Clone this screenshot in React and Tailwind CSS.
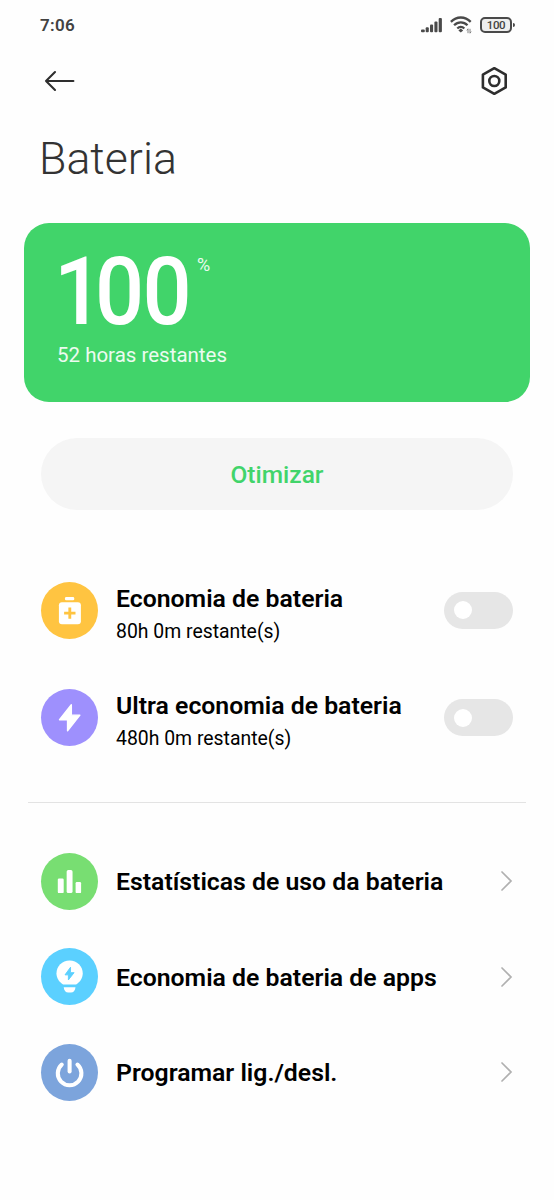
import { useState } from "react";

function SignalIcon() {
  return (
    <svg width="21" height="15" viewBox="0 0 21 15" fill="#4a4a4a">
      <rect x="0" y="11.6" width="3.8" height="2.7" rx="1" />
      <rect x="4.7" y="9.2" width="3.1" height="5.1" rx="1" />
      <rect x="9" y="6.4" width="3.1" height="7.9" rx="1" />
      <rect x="13.4" y="3.4" width="3.1" height="10.9" rx="1" />
      <rect x="17.7" y="0.1" width="3.2" height="14.2" rx="1" />
    </svg>
  );
}

function WifiIcon() {
  return (
    <svg width="22" height="18" viewBox="0 0 22 18" fill="none">
      <g stroke="#4a4a4a" strokeWidth="2.3">
        <path d="M0.9 5.9C6.6 0 15 0 20.7 5.9" />
        <path d="M4.1 9.3C8 5.4 13.6 5.4 17.5 9.3" />
        <path d="M7.3 12.5C9.3 10.5 12.3 10.5 14.3 12.5" />
      </g>
      <path d="M10.8 12.6L13.2 14.5L10.8 16.6L8.4 14.5Z" fill="#4a4a4a" />
      <path
        d="M18 17.2V12.8L16.8 14.4M20 12.8V17.2L21.2 15.6"
        stroke="#777"
        strokeWidth="0.9"
      />
    </svg>
  );
}

function BatteryPlusIcon() {
  return (
    <svg className="size-full" viewBox="0 0 56 56" fill="white">
      <rect x="23.5" y="14.8" width="9.2" height="3.2" rx="1.3" />
      <rect x="17.6" y="19.8" width="21.6" height="21.8" rx="3" />
      <path
        d="M28.3 25V36.2M22.7 30.6H33.9"
        stroke="#ffc441"
        strokeWidth="2.8"
      />
    </svg>
  );
}

function BoltIcon() {
  return (
    <svg className="size-full" viewBox="0 0 56 56" fill="white">
      <path
        d="M29.8 15.5V25.7H38.2L26.1 41V30.2H18.2Z"
        stroke="white"
        strokeWidth="1.4"
        strokeLinejoin="round"
      />
    </svg>
  );
}

function StatsIcon() {
  return (
    <svg className="size-full" viewBox="0 0 56 56" fill="white">
      <rect x="16.5" y="25" width="5.8" height="14.4" rx="1.2" />
      <rect x="25.2" y="16.8" width="5.8" height="22.6" rx="1.6" />
      <rect x="34" y="28.6" width="5.4" height="10.8" rx="1.2" />
    </svg>
  );
}

function BulbIcon() {
  return (
    <svg className="size-full" viewBox="0 0 56 56" fill="white">
      <path d="M28.1 12.2C20.8 12.2 15.2 17.8 15.2 24.8C15.2 29.7 17.8 33.4 21.7 35.8H34.5C38.4 33.4 41 29.7 41 24.8C41 17.8 35.4 12.2 28.1 12.2Z" />
      <path d="M22.3 38.6H33.9C33.6 42.1 31.8 43.8 29.4 43.8H26.8C24.4 43.8 22.6 42.1 22.3 38.6Z" />
      <path
        d="M29 18.9V24.2H32.5L26.9 31.4V26.4H23.6Z"
        fill="#5bd0ff"
        stroke="#5bd0ff"
        strokeWidth="0.9"
        strokeLinejoin="round"
      />
    </svg>
  );
}

function PowerIcon() {
  return (
    <svg
      className="size-full"
      viewBox="0 0 56 56"
      fill="none"
      stroke="white"
      strokeWidth="4"
      strokeLinecap="round"
    >
      <path d="M28.1 16.4V27" />
      <path d="M20.4 20.2A11.6 11.6 0 1 0 35.8 20.2" />
    </svg>
  );
}

const modes = [
  {
    id: "saver",
    title: "Economia de bateria",
    subtitle: "80h 0m restante(s)",
    color: "bg-[#ffc441]",
    Icon: BatteryPlusIcon,
  },
  {
    id: "ultra",
    title: "Ultra economia de bateria",
    subtitle: "480h 0m restante(s)",
    color: "bg-[#9e90fd]",
    Icon: BoltIcon,
  },
];

const links = [
  {
    title: "Estatísticas de uso da bateria",
    color: "bg-[#78de72]",
    Icon: StatsIcon,
  },
  {
    title: "Economia de bateria de apps",
    color: "bg-[#5bd0ff]",
    Icon: BulbIcon,
  },
  {
    title: "Programar lig./desl.",
    color: "bg-[#7ca4dc]",
    Icon: PowerIcon,
  },
];

function Toggle({ checked, onChange, label }) {
  return (
    <button
      role="switch"
      aria-checked={checked}
      aria-label={label}
      onClick={onChange}
      className={`flex h-[37px] w-[69px] shrink-0 items-center rounded-full px-2.5 ${
        checked ? "justify-end bg-[#41d46a]" : "bg-[#e6e6e6]"
      }`}
    >
      <span className="size-[18px] rounded-full bg-white" />
    </button>
  );
}

export default function App() {
  const [enabled, setEnabled] = useState({ saver: false, ultra: false });

  const toggle = (id) => setEnabled((prev) => ({ ...prev, [id]: !prev[id] }));

  return (
    <div className="min-h-[1200px] w-full bg-[#fefefe] font-['Roboto',sans-serif] text-black">
      {/* Status bar */}
      <div className="flex h-[50px] items-center justify-between pr-[39px] pl-10 text-[#424242]">
        <span className="pt-0.5 text-[17px] font-semibold tracking-[0.3px]">
          7:06
        </span>
        <div className="flex items-center">
          <SignalIcon />
          <span className="mr-2 ml-2 flex">
            <WifiIcon />
          </span>
          <div className="flex h-4 w-8 items-center justify-center rounded-[5px] border-2 border-[#4a4a4a] bg-[#eee] pt-px text-[11.5px] leading-none font-medium tracking-[-0.3px]">
            100
          </div>
          <span className="ml-px h-1 w-[2px] rounded-r bg-[#4a4a4a]" />
        </div>
      </div>

      <header className="flex h-[62px] items-center justify-between pr-[45px] pl-11">
        <button aria-label="Voltar">
          <svg
            width="32"
            height="22"
            viewBox="0 0 32 22"
            fill="none"
            stroke="#2e2e2e"
            strokeWidth="2.1"
            strokeLinecap="round"
            strokeLinejoin="round"
          >
            <path d="M29.4 11H2M11 2L2 11L11 20" />
          </svg>
        </button>
        <button aria-label="Configurações">
          <svg
            width="28"
            height="30"
            viewBox="0 0 28 30"
            fill="none"
            stroke="#2e2e2e"
            strokeWidth="2.6"
            strokeLinejoin="round"
          >
            <path d="M13.3 2.2L24.7 8.6V21.4L13.3 27.8L1.9 21.4V8.6Z" />
            <circle cx="13.3" cy="15" r="5" />
          </svg>
        </button>
      </header>

      <h1 className="mt-5 pl-[39px] text-[44.7px] leading-[54px] font-light text-[#333]">
        Bateria
      </h1>

      <section className="mx-6 mt-[37px] h-[179px] rounded-[25px] bg-[#41d46a] pt-[21px] pl-[33px] text-white">
        <div className="-ml-[3px] flex items-start">
          <span className="w-[136px] origin-left scale-x-[0.92] text-[94px] leading-[97px] font-medium tracking-[-1.6px]">
            <span className="tracking-[-9px]">1</span>00
          </span>
          <span className="mt-[11px] ml-[7px] text-[18px] leading-5 text-white/90">
            %
          </span>
        </div>
        <p className="mt-0.5 text-[20.5px] leading-6 text-white/90">
          52 horas restantes
        </p>
      </section>

      <button className="mx-[41px] mt-9 flex h-[72px] w-[472px] items-center justify-center rounded-full bg-[#f5f5f5] pt-0.5 text-[24.5px] font-medium text-[#41d46a]">
        Otimizar
      </button>

      <div className="mt-[71.5px] flex flex-col gap-[50.5px] px-[41px]">
        {modes.map(({ id, title, subtitle, color, Icon }) => (
          <div key={id} className="flex h-[57px] items-center">
            <div className={`size-[57px] shrink-0 rounded-full ${color}`}>
              <Icon />
            </div>
            <div className="ml-[18px] flex-1 pt-2.5 whitespace-nowrap">
              <p className="text-[24.8px] leading-8 font-semibold">{title}</p>
              <p className="mt-px text-[19.4px] leading-8">{subtitle}</p>
            </div>
            <Toggle
              checked={enabled[id]}
              onChange={() => toggle(id)}
              label={title}
            />
          </div>
        ))}
      </div>

      <hr className="mx-7 mt-14 border-[#e3e3e3]" />

      <nav className="mt-[49.5px] flex flex-col gap-[38.5px] px-[41px]">
        {links.map(({ title, color, Icon }) => (
          <a key={title} href="#" className="flex h-[57px] items-center">
            <div className={`size-[57px] shrink-0 rounded-full ${color}`}>
              <Icon />
            </div>
            <span className="ml-[18px] flex-1 pt-0.5 text-[24.8px] font-semibold whitespace-nowrap">
              {title}
            </span>
            <svg
              width="13"
              height="22"
              viewBox="0 0 13 22"
              fill="none"
              stroke="#b0b0b0"
              strokeWidth="1.7"
              strokeLinecap="round"
            >
              <path d="M2 2L11 11L2 20" />
            </svg>
          </a>
        ))}
      </nav>
    </div>
  );
}
